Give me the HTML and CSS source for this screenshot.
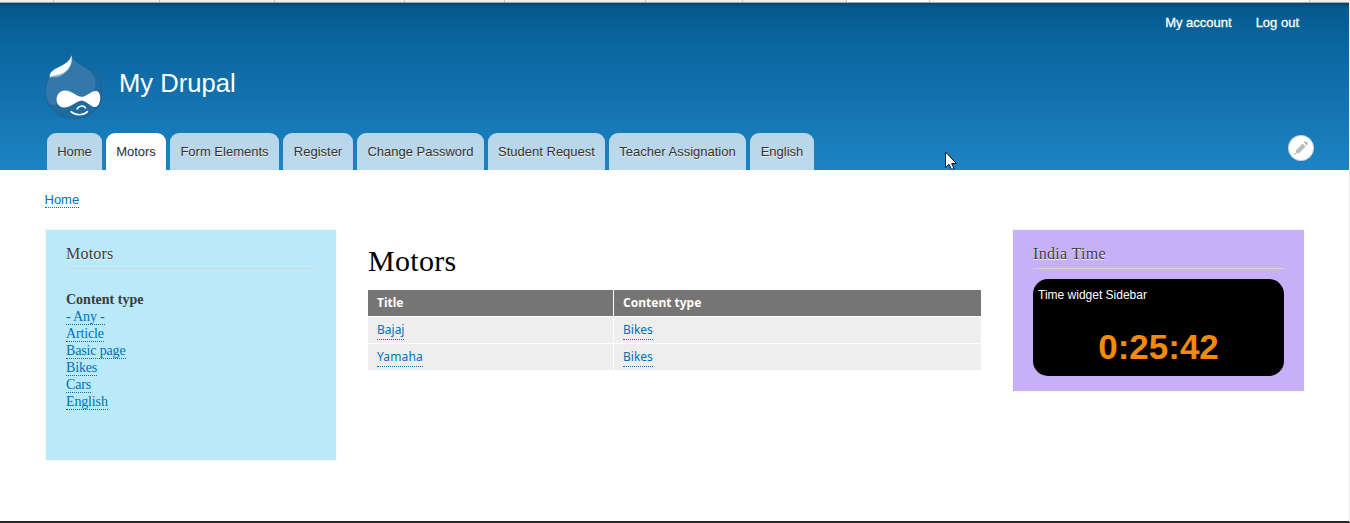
FILE: index.html
```html
<!DOCTYPE html>
<html lang="en">
<head>
<meta charset="utf-8">
<title>Motors | My Drupal</title>
<link rel="stylesheet" href="styles.css">
</head>
<body>
<div class="page">
  <div class="browser-strip">
    <i class="w54"></i><i class="w106"></i><i class="w115"></i><i class="w130"></i><i class="w100"></i><i class="w141"></i><i class="w97"></i><i class="w104"></i><i class="w83 active"></i><i class="w380"></i>
  </div>
  <header class="header">
    <nav class="account"><a>My account</a><a>Log out</a></nav>
    <div class="branding">
      <svg class="logo" width="60" height="66" viewBox="0 0 60 66">
        <path d="M27.7 0C29 8 36 10 43 14.500C53 20 58 28 58 38C58 54 46 64.500 30 64.500C13 64.500 1.500 53 1.500 37C1.500 28 6 20 14 15.500C20 11.500 27 8 27.7 0Z" fill="#1f6a9f"/>
        <path d="M27.700 0C29 8 36 10 43 14.500C53 23 54 33 48 39C43 44 38 40 31 43C20 48 15 53 5 50C2 46 1.500 42 1.500 37C1.500 28 6 20 14 15.500C20 11.500 27 8 27.700 0Z" fill="#3279a9"/>
        <path d="M27.7 0C29 8 36 10 43 14.500C53 20 58 28 58 38C58 54 46 64.500 30 64.500C13 64.500 1.500 53 1.500 37C1.500 28 6 20 14 15.500C20 11.500 27 8 27.7 0Z" fill="none" stroke="#155b8b" stroke-width=".6"/>
        <path d="M28 5C28 13 22 20 15 22.500C10 24.500 7 22 5.500 24L6 20C12 21 23 16 28 5Z" fill="#8bb4d3"/>
        <path d="M27.500 1C28.500 10 25 15.500 19 19C14 21.500 9 21 6.500 23C4 21 8 16.500 12 14.500C19 11 26 8 27.500 1Z" fill="#fff"/>
        <path d="M21 36.500C28 36.500 32 42.500 38 42.700C43 42 48 36 53 37C58 39 57 51 52 53C48 54 44 48 38 46.500C32 47 27 53.500 20 53.500C10 53 10 37 21 36.500Z" fill="#fff"/>
        <path d="M33 55C35 51.500 40 51 41.500 54M27 57.700C32 61.800 39 61.800 43.500 57.700" fill="none" stroke="#fff" stroke-width="1.6" stroke-linecap="round"/>
      </svg>
      <span class="site-name">My Drupal</span>
    </div>
    <nav class="tabs">
      <a class="t55">Home</a><a class="t60 current">Motors</a><a class="t109">Form Elements</a><a class="t70">Register</a><a class="t127">Change Password</a><a class="t117">Student Request</a><a class="t137">Teacher Assignation</a><a class="t64">English</a>
    </nav>
    <svg class="pointer" width="13" height="20" viewBox="0 0 13 20"><path d="M.5 1V16.500L4 13.200L6.500 18.500L9 17.500L6.700 12.500H11.500Z" fill="#fff" stroke="#001326"/></svg>
    <svg class="edit" width="28" height="28" viewBox="0 0 28 28"><circle cx="14" cy="14" r="12.600" fill="#fff" stroke="#c9cdd0"/><path d="M9 16.200L15.700 9.500L18.700 12.500L12 19.200L9 19.200ZM16.700 8.500L18 7.300Q19 6.800 20.200 8Q21.400 9.200 20.800 10.300L19.600 11.500ZM7.800 18.500L9.600 20.300L7 21Z" fill="#bbb"/></svg>
  </header>
  <div class="breadcrumb"><a>Home</a></div>
  <main class="columns">
    <aside class="filter">
      <h2>Motors</h2>
      <h3>Content type</h3>
      <ul><li><a>- Any -</a></li><li><a>Article</a></li><li><a>Basic page</a></li><li><a>Bikes</a></li><li><a>Cars</a></li><li><a>English</a></li></ul>
    </aside>
    <section class="content">
      <h1>Motors</h1>
      <div class="grid">
        <b>Title</b><b>Content type</b>
        <span><a>Bajaj</a></span><span><a>Bikes</a></span>
        <span><a class="wide">Yamaha</a></span><span><a>Bikes</a></span>
      </div>
    </section>
    <aside class="time">
      <h2>India Time</h2>
      <div class="widget"><p>Time widget Sidebar</p><div class="clock">0:25:42</div></div>
    </aside>
  </main>
</div>
</body>
</html>
```
FILE: styles.css
```css
* { box-sizing: border-box; }
body { margin: 0; background: #fff; overflow: hidden; }
h1, h2, h3, p, ul { margin: 0; padding: 0; font-weight: 400; list-style: none; }
.page { width: 1350px; height: 523px; display: flex; flex-direction: column; border-right: 1px solid #ededed; border-bottom: 2px solid #292929; font-family: "Liberation Sans", Arial, sans-serif; color: #3b3b3b; }
.browser-strip { display: flex; height: 3px; background: #f0f0f0; border-bottom: 1px solid #a0a5a8; flex: none; }
.browser-strip i { border-right: 1px solid #c4c4c4; }
.browser-strip .active { background: #fff; }
.w54 { width: 54px; } .w106 { width: 106px; } .w115 { width: 115px; } .w130 { width: 130px; } .w100 { width: 100px; } .w141 { width: 141px; } .w97 { width: 97px; } .w104 { width: 104px; } .w83 { width: 83px; } .w380 { width: 380px; background: #fafafa; }
.header { position: relative; height: 167px; flex: none; display: flex; flex-direction: column; background: linear-gradient(#054770 0, #055a8e 5px, #0a639b 32px, #1779b7 125px, #1d84c3 100%); }
.account { display: flex; justify-content: flex-end; height: 51px; padding: 12px 50px 0 0; gap: 24px; font-size: 13px; line-height: 15px; color: #fff; -webkit-text-stroke: .3px #fff; }
.branding { display: flex; height: 79px; padding-left: 44px; }
.logo { flex: none; }
.site-name { margin: 14px 0 0 15px; font-size: 25.6px; line-height: 30px; color: #fff; white-space: nowrap; }
.tabs { display: flex; gap: 4px; height: 37px; padding-left: 47px; font-size: 13px; line-height: 37px; text-align: center; }
.tabs a { background: linear-gradient(#b9d6e9, #bbdaed); border-radius: 9px 9px 0 0; text-shadow: 0 1px 0 #eee; color: #333; white-space: nowrap; }
.tabs .current { background: #fff; }
.t55 { width: 55px; } .t60 { width: 60px; } .t109 { width: 109px; } .t70 { width: 70px; } .t127 { width: 127px; } .t117 { width: 117px; } .t137 { width: 137px; } .t64 { width: 64px; }
.pointer { position: absolute; left: 945px; top: 148px; }
.edit { position: absolute; left: 1287px; top: 131px; }
.breadcrumb { height: 60px; flex: none; padding: 22px 0 0 44.5px; font-size: 13px; line-height: 15px; }
.breadcrumb a, .filter a, .grid a { display: inline-block; color: #0071b3; border-bottom: 1px dotted #0071b3; }
.columns { display: flex; align-items: flex-start; padding-left: 46px; }
.filter { width: 290px; height: 230px; padding: 14px 20px; background: #bae9f9; box-shadow: 0 0 0 1px #f7f7f7; font-family: "Liberation Serif", Georgia, serif; }
.filter h2, .time h2 { height: 25px; font: 16px/20px "Liberation Serif", Georgia, serif; border-bottom: 1px solid #d3d7d9; text-shadow: 0 1px 0 #fff; letter-spacing: .3px; }
.filter h3 { margin-top: 22px; font-size: 14px; line-height: 17px; font-weight: 700; }
.filter li { height: 17px; font-size: 14px; display: flex; letter-spacing: -.15px; }
.filter li a { height: 17px; line-height: 17px; }
.filter h2 { letter-spacing: .2px; }
.content { margin-left: 32px; width: 613px; padding-top: 14px; }
.content h1 { height: 46px; font: 30px/34px "Liberation Serif", Georgia, serif; color: #000; letter-spacing: .3px; }
.grid { display: grid; grid-template-columns: 245px 367px; grid-template-rows: 26px 26px 26px; gap: 1px; font: 12px/16px "Noto Sans", sans-serif; }
.grid b { padding: 5px 9px; background: #757575; color: #fff; }
.grid span { padding: 5px 9px; background: #eee; }
.grid a { height: 18px; }
.grid .wide { letter-spacing: .15px; }
.time { margin-left: 32px; width: 291px; height: 161px; padding: 14px 20px; background: #c7b0f8; box-shadow: 0 0 0 1px #f7f7f7; }
.widget { height: 97px; margin-top: 10px; padding: 8px 5px; border-radius: 15px; background: #000; color: #fff; }
.widget p { font-size: 12px; line-height: 16px; }
.clock { margin-top: 24px; font-size: 35px; line-height: 40px; font-weight: 700; text-align: center; color: #f58a07; }
```
